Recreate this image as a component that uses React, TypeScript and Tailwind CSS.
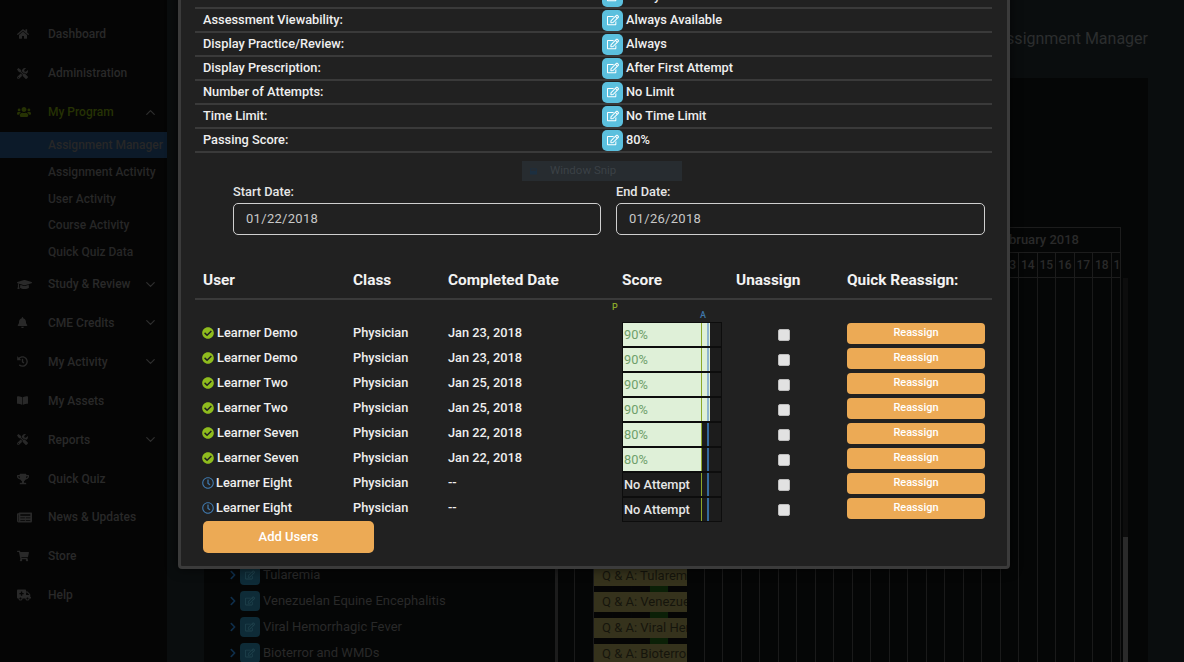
import { ChevronDown, ChevronUp } from 'lucide-react';
import type { ReactNode } from 'react';
import {
  FaAmbulance,
  FaBell,
  FaBookOpen,
  FaCheckCircle,
  FaChevronRight,
  FaGraduationCap,
  FaHistory,
  FaHome,
  FaNewspaper,
  FaRegClock,
  FaRegEdit,
  FaShoppingCart,
  FaTools,
  FaTrophy,
  FaUsers,
  FaWindowMaximize,
} from 'react-icons/fa';

const settings = [
  ['Assessment Mode:', 'Always'],
  ['Assessment Viewability:', 'Always Available'],
  ['Display Practice/Review:', 'Always'],
  ['Display Prescription:', 'After First Attempt'],
  ['Number of Attempts:', 'No Limit'],
  ['Time Limit:', 'No Time Limit'],
  ['Passing Score:', '80%'],
];

const learners = [
  { name: 'Learner Demo', date: 'Jan 23, 2018', score: 90 },
  { name: 'Learner Demo', date: 'Jan 23, 2018', score: 90 },
  { name: 'Learner Two', date: 'Jan 25, 2018', score: 90 },
  { name: 'Learner Two', date: 'Jan 25, 2018', score: 90 },
  { name: 'Learner Seven', date: 'Jan 22, 2018', score: 80 },
  { name: 'Learner Seven', date: 'Jan 22, 2018', score: 80 },
  { name: 'Learner Eight', date: '--', score: 0 },
  { name: 'Learner Eight', date: '--', score: 0 },
];

const subNav = ['Assignment Manager', 'Assignment Activity', 'User Activity', 'Course Activity', 'Quick Quiz Data'];
const days = [20, 21, 22, 23, 24, 25, 26, 27, 28, 29, 30, 31, 1, 2, 3, 4, 5, 6, 7, 8, 9, 10, 11, 12, 13, 14, 15, 16, 17, 18, 19];
const courses = ['Tularemia', 'Venezuelan Equine Encephalitis', 'Viral Hemorrhagic Fever', 'Bioterror and WMDs'];
const barLabels = ['Q & A: Tularemia', 'Q & A: Venezuelan', 'Q & A: Viral Hemorrhagic', 'Q & A: Bioterror'];

function NavItem({ icon, label, chevron, active }: { icon: ReactNode; label: string; chevron?: 'up' | 'down'; active?: boolean }) {
  return (
    <div className={`flex h-[38.9px] items-center pl-[17px] ${active ? 'text-[#263204]' : 'text-[#292929]'}`}>
      <span className="flex w-[31px] shrink-0 items-center">{icon}</span>
      <span className="flex-1 text-[12px] font-medium">{label}</span>
      {chevron === 'up' && <ChevronUp size={15} strokeWidth={2} className="mr-[9px] text-[#2e2e2e]" />}
      {chevron === 'down' && <ChevronDown size={15} strokeWidth={2} className="mr-[9px] text-[#2e2e2e]" />}
    </div>
  );
}

function Sidebar() {
  return (
    <aside className="w-[167px] shrink-0 bg-[#050505] pt-[15px]">
      <NavItem icon={<FaHome size={12} />} label="Dashboard" />
      <NavItem icon={<FaTools size={11} />} label="Administration" />
      <NavItem icon={<FaUsers size={14} />} label="My Program" chevron="up" active />
      <div>
        {subNav.map((item, i) => (
          <div
            key={item}
            className={`flex h-[26.8px] items-center whitespace-nowrap pl-[48px] text-[12px] font-medium text-[#272727] ${i === 0 ? 'bg-[#0c1a29]' : ''}`}
          >
            {item}
          </div>
        ))}
      </div>
      <div className="mt-[-1px]">
        <NavItem icon={<FaGraduationCap size={15} />} label="Study & Review" chevron="down" />
      </div>
      <NavItem icon={<FaBell size={11} />} label="CME Credits" chevron="down" />
      <NavItem icon={<FaHistory size={11} />} label="My Activity" chevron="down" />
      <NavItem icon={<FaBookOpen size={11} />} label="My Assets" />
      <NavItem icon={<FaTools size={11} />} label="Reports" chevron="down" />
      <NavItem icon={<FaTrophy size={12} />} label="Quick Quiz" />
      <NavItem icon={<FaNewspaper size={15} />} label="News & Updates" />
      <NavItem icon={<FaShoppingCart size={12} />} label="Store" />
      <NavItem icon={<FaAmbulance size={14} />} label="Help" />
    </aside>
  );
}

function Gantt() {
  return (
    <div className="flex flex-1">
      <div className="mt-[149px] w-[563px] shrink-0 overflow-hidden">
        <div className="flex h-[26px] border-y border-[#1c1c1c] pl-[220px]">
          <div className="flex flex-1 items-center justify-end border-x border-[#1c1c1c] pr-[41px] text-[13px] font-medium text-[#2a2a2a]">
            February 2018
          </div>
        </div>
        <div className="flex h-[25px] border-b border-[#1c1c1c]">
          {days.map((d, i) => (
            <div
              key={i}
              className={`flex shrink-0 items-center overflow-hidden border-r border-[#1c1c1c] text-[12px] font-medium text-[#2a2a2a] ${i === 0 ? 'w-[17px] justify-center' : i === days.length - 1 ? 'w-[9px] justify-start pl-[2px]' : 'w-[18.5px] justify-center'}`}
            >
              {d}
            </div>
          ))}
        </div>
        <div className="relative h-[384px] pt-[288px]">
          <div className="absolute inset-0 flex">
            {days.map((d, i) => (
              <div
                key={i}
                className={`shrink-0 border-r border-[#1a1a1a] ${i === 0 ? 'w-[17px]' : i === days.length - 1 ? 'w-[9px]' : 'w-[18.5px]'}`}
              />
            ))}
          </div>
          {barLabels.map((label) => (
            <div key={label} className="relative ml-[36px] h-[26px] w-[93px]">
              <div className="flex h-[20px] items-center overflow-hidden whitespace-nowrap bg-[#35321c] pl-[8px] text-[13px] text-[#15150c]">
                {label}
              </div>
              <div className="flex h-[6px] gap-[1px]">
                <div className="flex-1 bg-[#050505]" />
                <div className="flex-1 bg-[#050505]" />
                <div className="flex-1 bg-[#050505]" />
                <div className="flex-1 bg-[#0b2007]" />
                <div className="flex-1 bg-[#050505]" />
              </div>
            </div>
          ))}
        </div>
      </div>
      <div className="ml-[2px] mt-[200px] flex h-[384px] w-[5px] flex-col bg-[#0d0d0d]">
        <div className="h-[259px]" />
        <div className="flex-1 bg-[#2a2a2a]" />
      </div>
    </div>
  );
}

function Background() {
  return (
    <div className="flex h-[662px] overflow-hidden bg-[#0a0d0e]">
      <Sidebar />
      <main className="flex flex-1 flex-col pl-[37px] pr-[36px]">
        <header className="flex h-[78px] shrink-0 items-center justify-end pb-[1px] text-[16px] text-[#2c2e2e]">
          Assignment Manager
        </header>
        <div className="flex flex-1 bg-[#050606]">
          <div className="w-[351px] shrink-0 pl-[24px] pt-[484px]">
            {courses.map((c) => (
              <div key={c} className="flex h-[26px] items-center whitespace-nowrap text-[13px] text-[#292929]">
                <FaChevronRight size={10} className="mr-[2px] text-[#0f2e4a]" />
                <span className="mr-[3px] flex h-[20px] w-[20px] items-center justify-center rounded-[4px] bg-[#0e2b37]">
                  <FaRegEdit size={10} className="text-[#1e404b]" />
                </span>
                {c}
              </div>
            ))}
          </div>
          <div className="w-[3px] shrink-0 bg-[#1c1c1c]" />
          <Gantt />
        </div>
      </main>
    </div>
  );
}

function ScoreBar({ score }: { score: number }) {
  const attempted = score > 0;
  return (
    <div className="relative mt-[1px] h-[25px] w-[100px] self-start border border-[#0d0d0d] bg-[#1c1c1c]">
      {attempted && <div className="absolute inset-y-0 left-0 bg-[#dff0d8]" style={{ width: score === 90 ? 87 : 79 }} />}
      <div className="absolute inset-y-0 left-[78px] w-px bg-[#8aa82a]" />
      <div className={`absolute inset-y-0 left-[84px] w-[2px] ${score === 90 ? 'bg-[#8fb4d0]' : 'bg-[#346a9c]'}`} />
      <div className={`relative flex h-full items-center pl-px text-[12.8px] ${attempted ? 'font-normal text-[#6f9f6a]' : 'font-medium text-[#e6e6e6]'}`}>
        {attempted ? `${score}%` : 'No Attempt'}
      </div>
    </div>
  );
}

function Modal() {
  return (
    <div className="absolute inset-0 flex flex-col justify-end overflow-hidden pb-[93px] pl-[178px]">
      <div className="relative w-[832px] shrink-0 rounded-[4px] border-[3px] border-[#3b3b3b] bg-[#212121] pb-[13px] pl-[14px] pr-[15px] shadow-[0_0_12px_rgba(0,0,0,0.6)]">
        {settings.map(([label, value]) => (
          <div key={label} className="flex h-[24px] items-center border-b-2 border-[#3a3a3a] text-[12.8px] font-medium text-[#efefef]">
            <span className="w-[407px] pl-[8px]">{label}</span>
            <span className="mr-[3px] flex h-[21px] w-[21px] items-center justify-center rounded-[5px] bg-[#5bc0de]">
              <FaRegEdit size={12} className="text-white" />
            </span>
            <span>{value}</span>
          </div>
        ))}

        <div className="flex gap-[15px] pl-[38px] pt-[31px]">
          <div className="w-[368px]">
            <label className="mb-[4px] block h-[15px] text-[12.8px] font-medium leading-[15px] text-[#e6e6e6]">Start Date:</label>
            <div className="flex h-[32px] items-center rounded-[5px] border border-[#cfcfcf] pl-[12px] text-[13px] tracking-[0.3px] text-[#c8c8c8]">01/22/2018</div>
          </div>
          <div className="w-[369px]">
            <label className="mb-[4px] block h-[15px] text-[12.8px] font-medium leading-[15px] text-[#e6e6e6]">End Date:</label>
            <div className="flex h-[32px] items-center rounded-[5px] border border-[#cfcfcf] pl-[12px] text-[13px] tracking-[0.3px] text-[#c8c8c8]">01/26/2018</div>
          </div>
        </div>

        <div className="mt-[29px] grid h-[36px] grid-cols-[150px_95px_174px_114px_111px_1fr] items-center border-b-2 border-[#3a3a3a] pl-[8px] text-[15.4px] font-bold text-[#f2f2f2]">
          <span>User</span>
          <span>Class</span>
          <span>Completed Date</span>
          <span>Score</span>
          <span>Unassign</span>
          <span>Quick Reassign:</span>
        </div>

        <div className="relative h-[21px]">
          <span className="absolute left-[417px] top-[1px] text-[9px] font-medium text-[#8aa82a]">P</span>
          <span className="absolute left-[505px] top-[9px] text-[9px] font-medium text-[#3f77ab]">A</span>
        </div>

        {learners.map((l, i) => (
          <div key={i} className="grid h-[25px] grid-cols-[150px_95px_174px_114px_111px_1fr] grid-rows-[25px] items-center pl-[8px] text-[12.8px] font-medium text-[#efefef]">
            <span className="-ml-[1px] flex items-center pb-[2px]">
              {l.score > 0 ? (
                <FaCheckCircle size={12} className="mr-[3px] text-[#8fbc1e]" />
              ) : (
                <FaRegClock size={12} className="mr-[2px] text-[#3f77ab]" />
              )}
              {l.name}
            </span>
            <span className="pb-[2px]">Physician</span>
            <span className="pb-[2px]">{l.date}</span>
            <ScoreBar score={l.score} />
            <span className="pl-[42px]">
              <input type="checkbox" className="mt-[3px] block h-[12px] w-[12px] appearance-none rounded-[2px] border border-[#bdbdbd] bg-[#e2e2e2]" />
            </span>
            <button className="mt-[2px] h-[21px] w-[138px] self-start rounded-[4px] bg-[#ecaa55] text-[11px] font-medium text-white">Reassign</button>
          </div>
        ))}

        <button className="ml-[8px] block h-[32px] w-[171px] rounded-[5px] bg-[#ecaa55] text-[13px] font-medium text-white">Add Users</button>

        <div className="absolute bottom-[385px] left-[341px] flex h-[20px] w-[160px] items-center gap-[13px] bg-[#272c30] pl-[8px] text-[11.5px] text-[#3b4146]">
          <FaWindowMaximize size={7} className="text-[#1c2f40]" />
          Window Snip
        </div>
      </div>
    </div>
  );
}

export default function App() {
  return (
    <div className="relative h-[662px] w-[1184px] overflow-hidden font-['Roboto',sans-serif]">
      <Background />
      <Modal />
    </div>
  );
}
